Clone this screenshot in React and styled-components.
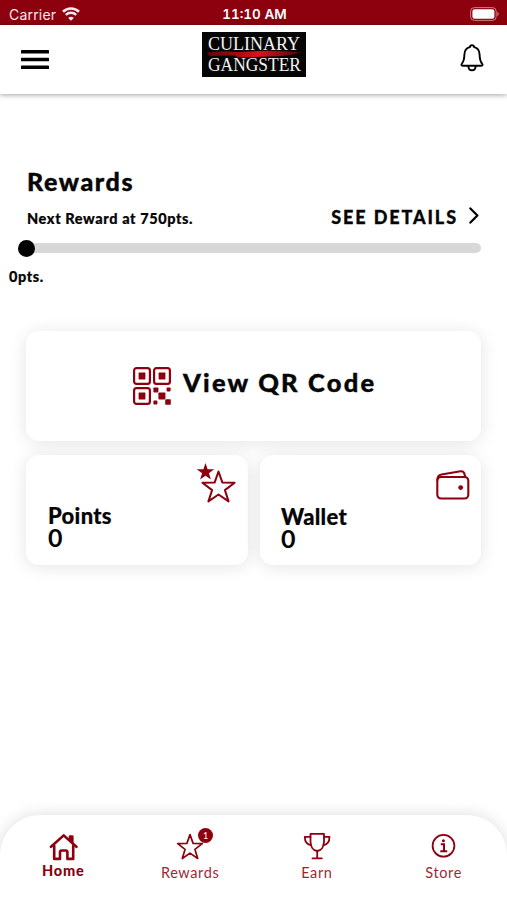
import styled, { createGlobalStyle, ThemeProvider } from "styled-components";

const theme = {
  brand: "#8d000e",
  text: "#060606",
  track: "#d8d8d8",
  white: "#ffffff",
};

const GlobalStyle = createGlobalStyle`
  * {
    box-sizing: border-box;
  }
  body {
    margin: 0;
    background: #fff;
    font-family: Lato, "Open Sans", sans-serif;
  }
  svg {
    display: block;
    flex-shrink: 0;
  }
`;

const Screen = styled.div`
  height: 900px;
  display: flex;
  flex-direction: column;
  overflow: hidden;
  color: ${({ theme }) => theme.text};
  background: ${({ theme }) => theme.white};
`;

const StatusBar = styled.div`
  height: 25px;
  padding: 2px 7px 0 9px;
  display: grid;
  grid-template-columns: 1fr auto 1fr;
  align-items: center;
  color: ${({ theme }) => theme.white};
  background: ${({ theme }) => theme.brand};
  font-family: Inter, sans-serif;
  font-size: 14px;
  line-height: 23px;
`;

const Carrier = styled.div`
  display: flex;
  align-items: center;
  gap: 6px;
  letter-spacing: 0.2px;
  opacity: 0.92;
`;

const Clock = styled.div`
  font-weight: 600;
  font-size: 13.5px;
  line-height: 24px;
  font-variant-numeric: tabular-nums;
`;

const Battery = styled.div`
  justify-self: end;
`;

const Header = styled.header`
  height: 69px;
  padding: 0 21px;
  display: flex;
  justify-content: space-between;
  align-items: flex-start;
  box-shadow: 0 1px 5px rgba(0, 0, 0, 0.36);
`;

const IconButton = styled.button`
  border: none;
  padding: ${({ $top }) => $top}px 0 0;
  width: 28px;
  display: flex;
  justify-content: center;
  background: none;
  color: inherit;
`;

const Logo = styled.div`
  padding: 7px 0 0 1px;
`;

const Main = styled.main`
  flex: 1;
  padding: 71px 26px 0;
`;

const Title = styled.h1`
  margin: 0 0 1px 1px;
  font-size: 25px;
  line-height: 32px;
  font-weight: 900;
  letter-spacing: 1.6px;
  -webkit-text-stroke: 0.4px currentColor;
`;

const Row = styled.div`
  height: 36px;
  padding-left: 1px;
  display: flex;
  justify-content: space-between;
`;

const NextReward = styled.div`
  padding-top: 10px;
  font-size: 14.5px;
  line-height: 22px;
  font-weight: 900;
  letter-spacing: 0.6px;
  -webkit-text-stroke: 0.2px currentColor;
`;

const Details = styled.a`
  padding: 6px 2px 0 0;
  display: flex;
  align-items: flex-start;
  gap: 11px;
  font-size: 18px;
  line-height: 26px;
  font-weight: 900;
  letter-spacing: 1.9px;
  -webkit-text-stroke: 0.3px currentColor;
`;

const Track = styled.div`
  height: 10px;
  margin-top: 9px;
  border-radius: 5px;
  display: flex;
  align-items: center;
  background: ${({ theme }) => theme.track};
`;

const Thumb = styled.div`
  width: 17px;
  height: 17px;
  margin-left: -8px;
  border-radius: 50%;
  background: #000;
`;

const Progress = styled.div`
  margin: 13px 0 0 -17px;
  font-size: 14.5px;
  line-height: 22px;
  font-weight: 900;
  letter-spacing: 0.6px;
  -webkit-text-stroke: 0.2px currentColor;
`;

const Cards = styled.section`
  margin-top: 43px;
  display: grid;
  grid-template-columns: 222px 221px;
  grid-template-rows: 110px 110px;
  gap: 14px 12px;
`;

const Card = styled.div`
  border-radius: 13px;
  background: ${({ theme }) => theme.white};
  box-shadow: 0 2px 18px rgba(0, 0, 0, 0.11);
`;

const QrCard = styled(Card)`
  grid-column: 1 / -1;
  padding: 36px 0 0 107px;
  display: flex;
  align-items: flex-start;
  gap: 12px;
`;

const QrLabel = styled.div`
  font-size: 25.5px;
  line-height: 30px;
  font-weight: 900;
  letter-spacing: 2.2px;
  -webkit-text-stroke: 0.4px currentColor;
`;

const StatCard = styled(Card)`
  padding: ${({ $top }) => $top}px 11px 0 21px;
  display: flex;
  justify-content: space-between;
  align-items: flex-start;
`;

const StatText = styled.div`
  padding: ${({ $top }) => $top}px 0 0 ${({ $left }) => $left || 0}px;
`;

const StatLabel = styled.div`
  font-size: 22px;
  line-height: 22px;
  font-weight: 900;
  letter-spacing: 0.3px;
  -webkit-text-stroke: 0.2px currentColor;
`;

const StatValue = styled.div`
  font-size: 25px;
  line-height: 21px;
  font-weight: 700;
`;

const TabBar = styled.nav`
  height: 85px;
  display: grid;
  grid-template-columns: repeat(4, 1fr);
  border-radius: 40px 40px 0 0;
  background: ${({ theme }) => theme.white};
  box-shadow: 0 0 16px rgba(0, 0, 0, 0.14);
`;

const Tab = styled.div`
  padding-top: 17px;
  display: flex;
  flex-direction: column;
  align-items: center;
  color: ${({ theme }) => theme.brand};
`;

const TabIcon = styled.div`
  position: relative;
  height: 30px;
`;

const TabLabel = styled.div`
  margin-top: ${({ $active }) => ($active ? 0 : 2)}px;
  font-size: 14.5px;
  line-height: 18px;
  font-weight: ${({ $active }) => ($active ? 900 : 400)};
  letter-spacing: ${({ $active }) => ($active ? 0.8 : 0.6)}px;
  opacity: ${({ $active }) => ($active ? 1 : 0.85)};
`;

const Badge = styled.span`
  position: absolute;
  top: -4px;
  right: -9px;
  width: 15px;
  height: 15px;
  border-radius: 50%;
  color: ${({ theme }) => theme.white};
  background: ${({ theme }) => theme.brand};
  font-size: 9px;
  line-height: 15px;
  text-align: center;
`;

const WifiIcon = () => (
  <svg width="18" height="14" viewBox="0 0 18 14" fill="none" stroke="#fff">
    <path d="M1 4.8 C5.5 .4 12.5 .4 17 4.8" strokeWidth="2.6" />
    <path d="M3.8 7.9 C6.8 5 11.2 5 14.2 7.9" strokeWidth="2.3" />
    <path d="M9 13.8 L6.2 10.9 C7.8 9.4 10.2 9.4 11.8 10.9 Z" fill="#fff" stroke="none" />
  </svg>
);

const BatteryIcon = () => (
  <svg width="30" height="14" viewBox="0 0 30 14">
    <rect x=".6" y=".6" width="25.6" height="12.8" rx="3.8" fill="none" stroke="#fff" strokeOpacity=".5" />
    <rect x="2.4" y="2.2" width="22" height="9.6" rx="2.2" fill="#fff" />
    <path d="M27.4 4.8 Q30 7 27.4 9.2 Z" fill="#fff" fillOpacity=".55" />
  </svg>
);

const MenuIcon = () => (
  <svg width="28" height="20" viewBox="0 0 28 20" fill="#000">
    <rect y="0" width="28" height="3.6" rx=".6" />
    <rect y="7.7" width="28" height="3.6" rx=".6" />
    <rect y="15.4" width="28" height="3.6" rx=".6" />
  </svg>
);

const BellIcon = () => (
  <svg width="24" height="28" viewBox="0 0 24 28" fill="none" stroke="#000" strokeWidth="1.9" strokeLinejoin="round">
    <path d="M12 1.3c1.3 0 2 .8 2.1 1.9 3.7.9 5.4 3.7 5.5 7.4.1 5.2.9 7.2 2.500 9 .9.9.5 2.100-.7 2.100H2.600c-1.200 0-1.600-1.200-.7-2.100 1.600-1.800 2.400-3.800 2.500-9 .1-3.700 1.800-6.500 5.500-7.400C10 2.100 10.700 1.300 12 1.300Z" />
    <path d="M8.300 22c.1 2.600 1.600 4.300 3.700 4.300s3.600-1.700 3.700-4.300" />
  </svg>
);

const LogoMark = () => (
  <svg width="104" height="45" viewBox="0 0 104 45">
    <defs>
      <linearGradient id="blade" x1="0" x2="1">
        <stop offset="0" stopColor="#5a0608" />
        <stop offset=".35" stopColor="#a80c10" />
        <stop offset=".55" stopColor="#e01418" />
        <stop offset="1" stopColor="#4a0507" />
      </linearGradient>
    </defs>
    <rect width="104" height="45" fill="#050505" />
    <path d="M5 20.500 Q18 18.500 34 20 L66 18.800 Q84 18.600 99 20.600 Q84 24.800 66 24.600 L36 25.400 L33 23.600 Q20 23.200 7 24.200 Z" fill="url(#blade)" />
    <g fill="#f2f2f2" fontFamily="'Liberation Serif', serif" fontSize="18.500">
      <text x="6" y="18" textLength="92" lengthAdjust="spacingAndGlyphs">CULINARY</text>
      <text x="6" y="39" textLength="93" lengthAdjust="spacingAndGlyphs">GANGSTER</text>
    </g>
  </svg>
);

const ChevronIcon = () => (
  <svg width="10" height="17" viewBox="0 0 10 17" fill="none" stroke="#000" strokeWidth="2.200" strokeLinecap="round" strokeLinejoin="round">
    <path d="M1.400 1.400 8.400 8.500 1.400 15.600" />
  </svg>
);

const ChevronSlot = styled.span`
  padding-top: 3px;
`;

const QrIcon = () => (
  <svg width="38" height="38" viewBox="0 0 38 38" fill={theme.brand}>
    <g fill="none" stroke={theme.brand} strokeWidth="2.200">
      <rect x="1.100" y="1.100" width="15.800" height="15.800" rx="2.400" />
      <rect x="21.100" y="1.100" width="15.800" height="15.800" rx="2.400" />
      <rect x="1.100" y="21.100" width="15.800" height="15.800" rx="2.400" />
    </g>
    <rect x="5.600" y="5.600" width="6.800" height="6.800" rx=".6" />
    <rect x="25.600" y="5.600" width="6.800" height="6.800" rx=".6" />
    <rect x="5.600" y="25.600" width="6.800" height="6.800" rx=".6" />
    <rect x="20.400" y="20.400" width="5" height="5" rx=".8" />
    <rect x="25.400" y="25.400" width="7" height="7" rx=".8" />
    <rect x="33.600" y="20.400" width="4" height="4" rx=".8" />
    <rect x="20.400" y="33.600" width="4" height="4" rx=".8" />
    <rect x="32.200" y="32.200" width="5.600" height="5.600" rx=".8" />
  </svg>
);

const StarsIcon = () => (
  <svg width="40" height="40" viewBox="0 0 40 40" fill={theme.brand}>
    <path d="M8.500 0 10.600 6.200 17.200 6.300 11.900 10.200 13.900 16.500 8.500 12.700 3.100 16.500 5.100 10.200 -.2 6.300 6.400 6.200Z" />
    <path
      d="M21.500 8.500 25.400 19.600 37.600 19.800 27.900 27.100 31.600 38.400 21.500 31.500 11.400 38.400 15.100 27.100 5.400 19.800 17.600 19.600Z"
      fill="#fff"
      stroke={theme.brand}
      strokeWidth="2"
      strokeLinejoin="round"
    />
  </svg>
);

const WalletIcon = () => (
  <svg width="34" height="30" viewBox="0 0 34 30" fill="none" stroke={theme.brand} strokeWidth="2.100" strokeLinejoin="round">
    <rect x="1.300" y="7" width="31" height="21.500" rx="3.800" />
    <path d="M1.400 10.500C1.300 6.500 2.500 5 5.500 4.500L24.500 1.300c2.400-.4 3.500.8 4 2.700l.7 3" />
    <circle cx="24.700" cy="17.600" r="2.400" fill={theme.brand} stroke="none" />
  </svg>
);

const HomeIcon = () => (
  <svg width="30" height="29" viewBox="0 0 30 29" fill="none" stroke={theme.brand} strokeWidth="2.600" strokeLinejoin="round" strokeLinecap="round">
    <path d="M3 14.800 15.700 3.400 28.400 14.800" />
    <path d="M22 7V4.600H24.300V10.500" fill={theme.brand} />
    <path d="M6.200 13.800V26.900H12V20.200Q12 18.500 13.700 18.500H17.700Q19.400 18.500 19.400 20.200V26.900H25.200V13.800" />
  </svg>
);

const StarIcon = () => (
  <svg width="28" height="29" viewBox="0 0 28 29" fill="none" stroke={theme.brand} strokeWidth="1.700" strokeLinejoin="round">
    <path d="M14 2.600 17.100 11.400 26.300 11.600 18.900 17.300 21.700 26.500 14 21.100 6.300 26.500 9.100 17.300 1.700 11.600 10.900 11.400Z" />
  </svg>
);

const TrophyIcon = () => (
  <svg width="28" height="29" viewBox="0 0 28 29" fill="none" stroke={theme.brand} strokeWidth="1.800" strokeLinejoin="round" strokeLinecap="round">
    <path d="M7.500 1.800H21V9.500C21 14.500 18.500 18.500 14.200 19C10 18.500 7.500 14.500 7.500 9.500Z" />
    <path d="M7.500 4.800H1.800C1.800 9.500 3.500 12.700 8.300 13.200M21 4.800H26.500C26.500 9.500 24.500 12.700 20.200 13.200" />
    <path d="M14.200 19V26.300M9.500 26.400H18.800" />
  </svg>
);

const InfoIcon = () => (
  <svg width="26" height="29" viewBox="0 0 26 29" fill="none" stroke={theme.brand} strokeWidth="1.800">
    <circle cx="12.500" cy="13.800" r="10.900" />
    <circle cx="12.400" cy="8.800" r="1.500" fill={theme.brand} stroke="none" />
    <path d="M9.800 12.300H13V19M9.300 19.200H16.200" strokeWidth="2" />
  </svg>
);

const tabs = [
  { label: "Home", Icon: HomeIcon, active: true },
  { label: "Rewards", Icon: StarIcon, badge: 1 },
  { label: "Earn", Icon: TrophyIcon },
  { label: "Store", Icon: InfoIcon },
];

const App = () => {
  return (
    <ThemeProvider theme={theme}>
      <GlobalStyle />
      <Screen>
        <StatusBar>
          <Carrier>
            Carrier <WifiIcon />
          </Carrier>
          <Clock>11:10 AM</Clock>
          <Battery>
            <BatteryIcon />
          </Battery>
        </StatusBar>
        <Header>
          <IconButton $top={25} aria-label="Menu">
            <MenuIcon />
          </IconButton>
          <Logo>
            <LogoMark />
          </Logo>
          <IconButton $top={19} aria-label="Notifications">
            <BellIcon />
          </IconButton>
        </Header>
        <Main>
          <Title>Rewards</Title>
          <Row>
            <NextReward>Next Reward at 750pts.</NextReward>
            <Details>
              SEE DETAILS
              <ChevronSlot>
                <ChevronIcon />
              </ChevronSlot>
            </Details>
          </Row>
          <Track>
            <Thumb />
          </Track>
          <Progress>0pts.</Progress>
          <Cards>
            <QrCard>
              <QrIcon />
              <QrLabel>View QR Code</QrLabel>
            </QrCard>
            <StatCard $top={8}>
              <StatText $top={42} $left={1}>
                <StatLabel>Points</StatLabel>
                <StatValue>0</StatValue>
              </StatText>
              <StarsIcon />
            </StatCard>
            <StatCard $top={15}>
              <StatText $top={36}>
                <StatLabel>Wallet</StatLabel>
                <StatValue>0</StatValue>
              </StatText>
              <WalletIcon />
            </StatCard>
          </Cards>
        </Main>
        <TabBar>
          {tabs.map(({ label, Icon, active, badge }) => (
            <Tab key={label}>
              <TabIcon>
                <Icon />
                {badge && <Badge>{badge}</Badge>}
              </TabIcon>
              <TabLabel $active={active}>{label}</TabLabel>
            </Tab>
          ))}
        </TabBar>
      </Screen>
    </ThemeProvider>
  );
};

export default App;
